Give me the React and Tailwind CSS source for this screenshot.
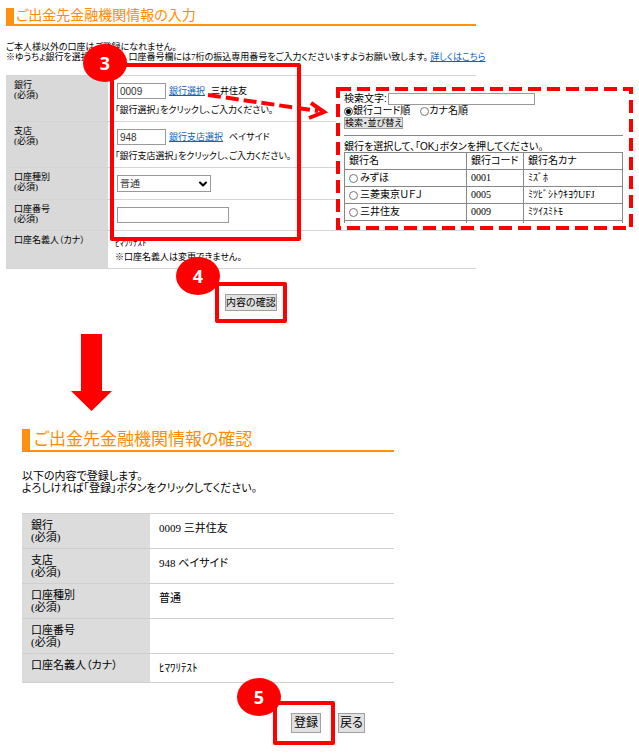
import { useState } from "react";
import { ChevronDown } from "lucide-react";

const BANKS = [
  { code: "0001", name: "みずほ", kana: "ﾐｽﾞﾎ" },
  { code: "0005", name: "三菱東京ＵＦＪ", kana: "ﾐﾂﾋﾞｼﾄｳｷﾖｳUFJ" },
  { code: "0009", name: "三井住友", kana: "ﾐﾂｲｽﾐﾄﾓ" },
];

const CONFIRM_ROWS = [
  { label: "銀行", required: true, value: "0009 三井住友" },
  { label: "支店", required: true, value: "948 ベイサイド" },
  { label: "口座種別", required: true, value: "普通" },
  { label: "口座番号", required: true, value: "" },
  { label: "口座名義人（カナ）", required: false, value: "ﾋﾏﾜﾘﾃｽﾄ" },
];

const textBox = "border border-[#999] bg-white px-0.5 font-['Liberation_Sans','Noto_Sans_CJK_JP',sans-serif] text-[10px] text-[#333]";
const greyButton = "border border-[#a0a0a0] bg-[#e1e1e1] text-black";
const link = "text-[#0b62b8] underline";

function Step({ n, className }) {
  return (
    <span
      className={`absolute z-20 flex h-[38px] w-11 items-center justify-center rounded-[50%] bg-[#ff0000] font-['Open_Sans',sans-serif] text-lg font-bold text-white ${className}`}
    >
      {n}
    </span>
  );
}

function FormRow({ id, label, required, height, children }) {
  return (
    <tr className={`border-y border-[#d4d4d4] ${height}`}>
      <th className="w-[102px] bg-[#d9d9d9] px-2 pt-1 text-left align-top font-normal">
        <label htmlFor={id} className="block">{label}</label>
        {required && <span className="block">(必須)</span>}
      </th>
      <td className="px-[7px] pt-[7px] align-top">{children}</td>
    </tr>
  );
}

function BankSearch() {
  const [order, setOrder] = useState("code");
  const [bank, setBank] = useState("");
  const radio = "size-[9px] shrink-0 appearance-none rounded-full border border-[#777] bg-white checked:bg-black checked:shadow-[inset_0_0_0_1px_white]";
  const cell = "border border-[#888] px-1 text-left font-normal";

  return (
    <aside className="absolute left-[336px] top-[87px] z-10 h-[143px] w-[297px] bg-white py-1.5 pl-2 pr-2.5 font-['Liberation_Sans','Noto_Sans_CJK_JP',sans-serif]">
      <svg className="pointer-events-none absolute inset-0 size-full" aria-hidden="true">
        <rect x="2" y="2" width="293" height="139" fill="none" stroke="#ff0000" strokeWidth="4" strokeDasharray="13 6" />
      </svg>
      <div className="h-[130px] overflow-hidden text-[10px] leading-3">
        <div className="flex items-center">
          <label htmlFor="keyword">検索文字:</label>
          <input id="keyword" className="ml-px h-3 w-[147px] border border-[#999] bg-white px-0.5" />
        </div>
        <div className="flex gap-2.5">
          <label className="flex items-center">
            <input type="radio" name="order" className={radio} checked={order === "code"} onChange={() => setOrder("code")} />
            銀行コード順
          </label>
          <label className="flex items-center">
            <input type="radio" name="order" className={radio} checked={order === "kana"} onChange={() => setOrder("kana")} />
            カナ名順
          </label>
        </div>
        <button type="button" className={`${greyButton} block h-3 text-[9px] leading-[10px]`}>検索・並び替え</button>
        <hr className="my-1.5 border-[#888]" />
        <p className="leading-[10px]">銀行を選択して、「OK」ボタンを押してください。</p>
        <table className="w-full table-fixed border-collapse">
          <thead>
            <tr className="h-[17px]">
              <th className={`${cell} w-[122px]`}>銀行名</th>
              <th className={`${cell} w-[57px]`}>銀行コード</th>
              <th className={cell}>銀行名カナ</th>
            </tr>
          </thead>
          <tbody>
            {BANKS.map(b => (
              <tr key={b.code} className="h-[17px]">
                <td className={cell}>
                  <label className="flex items-center gap-0.5">
                    <input type="radio" name="bank" className={radio} checked={bank === b.code} onChange={() => setBank(b.code)} />
                    {b.name}
                  </label>
                </td>
                <td className={`${cell} font-['Liberation_Serif',serif]`}>{b.code}</td>
                <td className={`${cell} font-['Liberation_Serif','Noto_Sans_CJK_JP',serif]`}>{b.kana}</td>
              </tr>
            ))}
            <tr className="h-[17px]">
              <td className={cell} />
              <td className={cell} />
              <td className={cell} />
            </tr>
          </tbody>
        </table>
      </div>
    </aside>
  );
}

function InputScreen() {
  return (
    <section className="relative pl-1.5 pt-2 text-[9px] leading-[10px]">
      <div className="max-w-[470px]">
        <h1 className="flex h-[18px] items-center border-b-2 border-l-8 border-[#ff9010] pl-0.5 text-sm leading-4 text-[#ff8c00]">
          ご出金先金融機関情報の入力
        </h1>
        <p className="mt-4 whitespace-nowrap">
          ご本人様以外の口座はご登録になれません。<br />
          ※ゆうちょ銀行を選択する場合、口座番号欄には7桁の振込専用番号をご入力くださいますようお願い致します。{" "}
          <a href="#detail" className={link}>詳しくはこちら</a>
        </p>
        <table className="mt-[13px] w-full border-collapse">
          <tbody>
            <FormRow id="bank-code" label="銀行" required height="h-[46px]">
              <div className="flex items-center pl-0.5">
                <input id="bank-code" className={`${textBox} h-4 w-[49px]`} defaultValue="0009" />
                <a href="#bank" className={`${link} ml-[3px]`}>銀行選択</a>
                <span className="ml-1.5">三井住友</span>
              </div>
              <p className="mt-1.5">「銀行選択」をクリックし、ご入力ください。</p>
            </FormRow>
            <FormRow id="branch-code" label="支店" required height="h-[46px]">
              <div className="flex items-center pl-0.5">
                <input id="branch-code" className={`${textBox} h-4 w-[49px]`} defaultValue="948" />
                <a href="#branch" className={`${link} ml-[3px]`}>銀行支店選択</a>
                <span className="ml-1.5">ベイサイド</span>
              </div>
              <p className="mt-1.5">「銀行支店選択」をクリックし、ご入力ください。</p>
            </FormRow>
            <FormRow id="kind" label="口座種別" required height="h-8">
              <div className="relative ml-0.5 w-[94px]">
                <select id="kind" className={`${textBox} block h-[17px] w-full appearance-none leading-none`} defaultValue="普通">
                  <option>普通</option>
                  <option>当座</option>
                </select>
                <ChevronDown className="pointer-events-none absolute right-0.5 top-[3px] size-3 text-black" strokeWidth={4} />
              </div>
            </FormRow>
            <FormRow id="number" label="口座番号" required height="h-[31px]">
              <input id="number" className={`${textBox} ml-0.5 block h-4 w-28`} />
            </FormRow>
            <FormRow label="口座名義人（カナ）" height="h-[38px]">
              <p>ﾋﾏﾜﾘﾃｽﾄ</p>
              <p className="mt-1">※口座名義人は変更できません。</p>
            </FormRow>
          </tbody>
        </table>
      </div>

      <div className="pointer-events-none absolute left-[110px] top-[63px] h-[178px] w-[191px] rounded-xs border-4 border-[#ff0000]" />
      <Step n={3} className="left-[83px] top-[44px]" />
      <BankSearch />
      <svg className="pointer-events-none absolute left-[200px] top-[88px] z-20 h-9 w-32" viewBox="0 0 128 36" fill="none" stroke="#ff0000" aria-hidden="true">
        <path d="M8 7 L118 23" strokeWidth="4" strokeDasharray="13 5" />
        <path d="M111 15 L124 24 L109 30" strokeWidth="4" />
      </svg>

      <div className="relative ml-[209px] mt-[13px] w-fit rounded-xs border-4 border-[#ff0000] px-1.5 py-2">
        <Step n={4} className="-left-[43px] -top-[29px]" />
        <button type="button" className={`${greyButton} block h-[17px] text-[10px]`}>内容の確認</button>
      </div>
    </section>
  );
}

function ConfirmScreen() {
  return (
    <section className="max-w-[394px] pl-[22px] text-[11px] leading-3">
      <h2 className="flex h-[23px] items-center border-b-2 border-l-8 border-[#ff9010] pl-1 text-[17px] leading-5 text-[#ff8c00]">
        ご出金先金融機関情報の確認
      </h2>
      <p className="mt-[18px]">
        以下の内容で登録します。<br />
        よろしければ「登録」ボタンをクリックしてください。
      </p>
      <table className="mt-[19px] w-full border-collapse">
        <tbody>
          {CONFIRM_ROWS.map(row => (
            <tr key={row.label} className={`border-y border-[#d0d0d0] ${row.required ? "h-[35px]" : "h-[29px]"}`}>
              <th className="w-32 bg-[#dcdcdc] px-[9px] pt-[5px] text-left align-top font-normal">
                {row.label}
                {row.required && <span className="block">(必須)</span>}
              </th>
              <td className="px-[9px] pt-2 align-top">{row.value}</td>
            </tr>
          ))}
        </tbody>
      </table>
      <div className="ml-[251px] mt-[18px] flex items-center gap-[3px]">
        <div className="relative rounded-xs border-4 border-[#ff0000] pb-2 pl-3.5 pr-2.5 pt-2">
          <Step n={5} className="-left-10 -top-[27px]" />
          <button type="submit" className={`${greyButton} block h-5 whitespace-nowrap px-0.5 text-xs`}>登録</button>
        </div>
        <button type="button" className={`${greyButton} h-5 whitespace-nowrap px-px text-xs`}>戻る</button>
      </div>
    </section>
  );
}

export default function App() {
  return (
    <main className="min-h-screen bg-white pb-2 font-['Liberation_Serif','Noto_Sans_CJK_JP',sans-serif] text-black [font-feature-settings:'palt']" lang="ja">
      <InputScreen />
      <svg className="mb-[18px] ml-[71px] mt-[11px] block h-[77px] w-[41px]" viewBox="0 0 41 77" aria-hidden="true">
        <path d="M10 0 H31 V57 H41 L20.5 77 L0 57 H10 Z" fill="#ff0000" />
      </svg>
      <ConfirmScreen />
    </main>
  );
}
